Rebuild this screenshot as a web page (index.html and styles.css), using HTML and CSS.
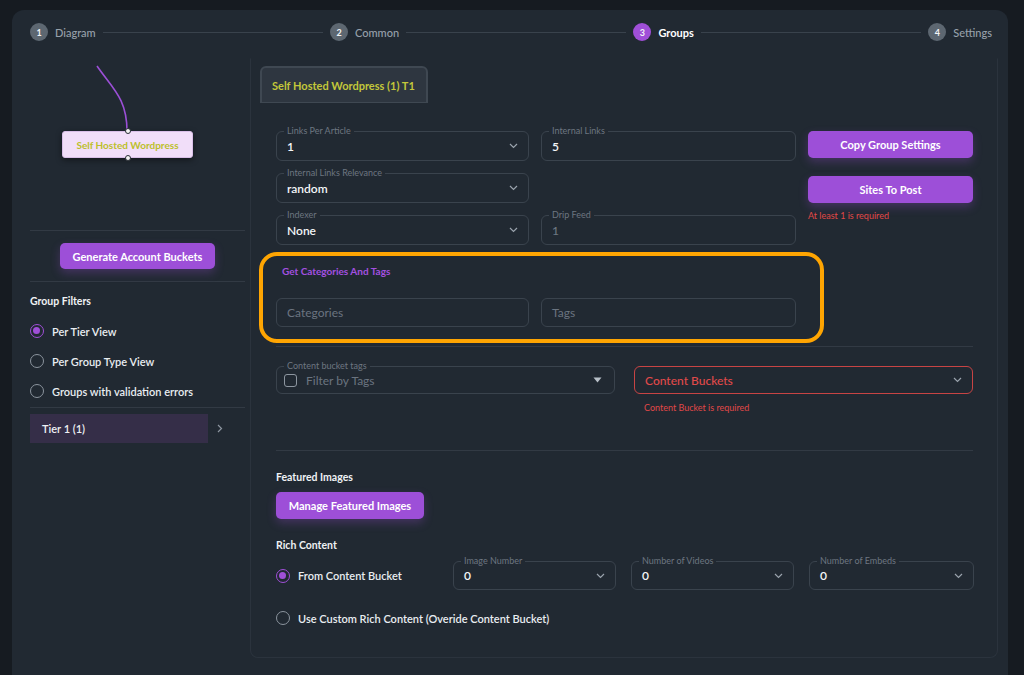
FILE: index.html
```html
<!DOCTYPE html>
<html>
<head>
<meta charset="utf-8">
<link rel="stylesheet" href="styles.css">
</head>
<body>
<div class="app">
  <div class="card">
    <div class="stepper">
      <div class="step"><span class="num">1</span><span class="lbl">Diagram</span></div>
      <div class="line"></div>
      <div class="step"><span class="num">2</span><span class="lbl">Common</span></div>
      <div class="line"></div>
      <div class="step active"><span class="num">3</span><span class="lbl">Groups</span></div>
      <div class="line"></div>
      <div class="step"><span class="num">4</span><span class="lbl">Settings</span></div>
    </div>
    <div class="main">
      <aside class="side">
        <div class="diagram">
          <svg class="edge" width="238" height="172" viewBox="0 0 238 172">
            <path d="M85 8 C 100 30, 115 40, 115 73" fill="none" stroke="#9b4fd6" stroke-width="1.6"/>
          </svg>
          <div class="node">Self Hosted Wordpress<span class="dot dot-top"></span><span class="dot dot-bottom"></span></div>
        </div>
        <div class="sep"></div>
        <div class="gen-wrap"><button class="btn btn-gen">Generate Account Buckets</button></div>
        <div class="sep"></div>
        <div class="side-title">Group Filters</div>
        <div class="filters">
          <label class="radio-row"><span class="radio on"></span>Per Tier View</label>
          <label class="radio-row"><span class="radio"></span>Per Group Type View</label>
          <label class="radio-row"><span class="radio"></span>Groups with validation errors</label>
        </div>
        <div class="sep"></div>
        <div class="tier-row">
          <div class="tier">Tier 1 (1)</div>
          <svg class="tier-chev" width="6" height="9" viewBox="0 0 6 9"><path d="M1 1 L4.5 4.5 L1 8" fill="none" stroke="#8d96a0" stroke-width="1.2"/></svg>
        </div>
      </aside>

      <section class="panel">
        <div class="tabs"><div class="tab">Self Hosted Wordpress (1) T1</div></div>
        <div class="form">
          <div class="grid3">
            <div class="field">
              <span class="flabel">Links Per Article</span>
              <span class="val">1</span>
              <svg class="chev" width="9" height="6" viewBox="0 0 9 6"><path d="M1 1 L4.5 4.5 L8 1" fill="none" stroke="#9aa3ad" stroke-width="1.2"/></svg>
            </div>
            <div class="field">
              <span class="flabel">Internal Links</span>
              <span class="val">5</span>
            </div>
            <div class="actions">
              <button class="btn btn-block">Copy Group Settings</button>
              <button class="btn btn-block btn-sites">Sites To Post</button>
              <div class="err err-sites">At least 1 is required</div>
            </div>
            <div class="field">
              <span class="flabel">Internal Links Relevance</span>
              <span class="val">random</span>
              <svg class="chev" width="9" height="6" viewBox="0 0 9 6"><path d="M1 1 L4.5 4.5 L8 1" fill="none" stroke="#9aa3ad" stroke-width="1.2"/></svg>
            </div>
            <div class="empty"></div>
            <div class="field">
              <span class="flabel">Indexer</span>
              <span class="val">None</span>
              <svg class="chev" width="9" height="6" viewBox="0 0 9 6"><path d="M1 1 L4.5 4.5 L8 1" fill="none" stroke="#9aa3ad" stroke-width="1.2"/></svg>
            </div>
            <div class="field">
              <span class="flabel">Drip Feed</span>
              <span class="val dim">1</span>
            </div>
          </div>

          <div class="highlight">
            <div class="hl-title">Get Categories And Tags</div>
            <div class="hl-inputs">
              <div class="field plain"><span class="ph">Categories</span></div>
              <div class="field plain"><span class="ph">Tags</span></div>
            </div>
          </div>

          <div class="hr hr-1"></div>

          <div class="bucket-row">
            <div class="field f28">
              <span class="flabel">Content bucket tags</span>
              <span class="cbox"></span>
              <span class="ph">Filter by Tags</span>
              <svg class="tri" width="9" height="6" viewBox="0 0 9 6"><path d="M0.5 0.5 L8.5 0.5 L4.5 5.5 Z" fill="#b8c0c8"/></svg>
            </div>
            <div class="bucket-col">
              <div class="field f28 error">
                <span class="val red">Content Buckets</span>
                <svg class="chev" width="9" height="6" viewBox="0 0 9 6"><path d="M1 1 L4.5 4.5 L8 1" fill="none" stroke="#9aa3ad" stroke-width="1.2"/></svg>
              </div>
              <div class="err err-bucket">Content Bucket is required</div>
            </div>
          </div>

          <div class="hr hr-2"></div>

          <div class="sec-title">Featured Images</div>
          <button class="btn btn-feat">Manage Featured Images</button>

          <div class="sec-title rich-title">Rich Content</div>
          <div class="rich-row">
            <label class="radio-row rr"><span class="radio on"></span>From Content Bucket</label>
            <div class="field">
              <span class="flabel">Image Number</span>
              <span class="val">0</span>
              <svg class="chev" width="9" height="6" viewBox="0 0 9 6"><path d="M1 1 L4.5 4.5 L8 1" fill="none" stroke="#9aa3ad" stroke-width="1.2"/></svg>
            </div>
            <div class="field">
              <span class="flabel">Number of Videos</span>
              <span class="val">0</span>
              <svg class="chev" width="9" height="6" viewBox="0 0 9 6"><path d="M1 1 L4.5 4.5 L8 1" fill="none" stroke="#9aa3ad" stroke-width="1.2"/></svg>
            </div>
            <div class="field">
              <span class="flabel">Number of Embeds</span>
              <span class="val">0</span>
              <svg class="chev" width="9" height="6" viewBox="0 0 9 6"><path d="M1 1 L4.5 4.5 L8 1" fill="none" stroke="#9aa3ad" stroke-width="1.2"/></svg>
            </div>
          </div>
          <label class="radio-row rr2"><span class="radio"></span>Use Custom Rich Content (Overide Content Bucket)</label>
        </div>
      </section>
    </div>
  </div>
</div>
</body>
</html>
```

FILE: styles.css
```css
* { box-sizing: border-box; }
html, body { margin: 0; padding: 0; }
body {
  background: #161b21;
  font-family: "Lato", "Noto Sans", sans-serif;
  color: #e8ecf0;
  width: 1024px;
  height: 675px;
  overflow: hidden;
}
.app { padding: 10px 16px 0 12px; }
.card {
  background: #212932;
  border-radius: 12px 12px 0 0;
  height: 665px;
  padding-right: 10px;
}

/* stepper */
.stepper {
  height: 44px;
  display: flex;
  align-items: center;
  padding: 0 6px 0 18px;
}
.step { display: flex; align-items: center; gap: 7px; }
.num {
  width: 18px; height: 18px; border-radius: 50%;
  background: #5d6771; color: #f2f4f6;
  font-size: 9px; font-weight: 700;
  display: flex; align-items: center; justify-content: center;
}
.lbl { font-size: 11px; color: #97a0aa; font-weight: 500; }
.step.active .num { background: #a04fd8; }
.step.active .lbl { color: #ffffff; font-weight: 700; }
.line { flex: 1; height: 1px; background: #39424c; margin: 0 7px; }

/* main */
.main { display: flex; margin-top: 4px; }
.side { width: 238px; padding: 0 5px 0 18px; }
.diagram { position: relative; height: 172px; margin-left: -18px; margin-right: -5px; }
.edge { position: absolute; left: 0; top: 0; }
.node {
  position: absolute; left: 50px; top: 73px;
  width: 131px; height: 27px;
  background: #f1def9;
  border: 1px solid #d9bfe8;
  border-radius: 3px;
  box-shadow: 0 2px 6px rgba(0,0,0,0.45);
  color: #bcc02c; font-size: 10px; font-weight: 700;
  display: flex; align-items: center; justify-content: center;
}
.dot {
  position: absolute; left: 62px; width: 6px; height: 6px; border-radius: 50%;
  background: #f4f4f4; border: 1px solid #2a2f36;
}
.dot-top { top: -4px; }
.dot-bottom { bottom: -4px; }
.sep { height: 1px; background: #323a44; }

.btn {
  background: #9d4fd8;
  color: #ffffff;
  font-family: "Lato", "Noto Sans", sans-serif;
  font-weight: 700; font-size: 11px;
  border: 0; border-radius: 5px;
  box-shadow: 0 4px 10px rgba(157,79,216,0.28);
  display: flex; align-items: center; justify-content: center;
  padding: 0;
}
.gen-wrap { display: flex; justify-content: center; padding: 12px 0; }
.btn-gen { width: 155px; height: 26px; }

.side-title { font-size: 10.5px; font-weight: 700; color: #f0f2f4; margin-top: 12px; line-height: 14px; }
.filters { margin-top: 8px; padding-bottom: 1px; }
.radio-row {
  display: flex; align-items: center; gap: 8px;
  font-size: 11px; font-weight: 600; color: #e9edf1; height: 30px;
}
.radio {
  width: 14px; height: 14px; border-radius: 50%;
  border: 1.6px solid #8b949e; flex: none; position: relative;
}
.radio.on { border-color: #a04fd8; }
.radio.on::after {
  content: ""; position: absolute; left: 2px; top: 2px; width: 7px; height: 7px;
  border-radius: 50%; background: #a04fd8;
}
.tier-row { display: flex; align-items: center; margin-top: 6px; }
.tier {
  width: 178px; height: 29px; background: #352e48;
  display: flex; align-items: center; padding-left: 12px;
  font-size: 11px; font-weight: 600; color: #eef0f3;
}
.tier-chev { margin-left: 9px; }

/* panel */
.panel {
  width: 748px; height: 600px;
  border: 1px solid #2b333d;
  border-top-color: transparent;
  border-radius: 0 0 8px 8px;
}
.tabs { padding: 7px 0 0 9px; }
.tab {
  display: inline-flex; align-items: center;
  height: 37px; padding: 0 11px 0 10px;
  background: #2e3640;
  border: 2px solid #3f4852;
  border-bottom-width: 1px;
  border-radius: 6px 6px 0 0;
  color: #c3c73a; font-size: 11px; font-weight: 700;
}
.form { padding: 28px 24px 0 25px; }
.grid3 {
  display: grid;
  grid-template-columns: 253px 255px 165px;
  grid-template-rows: 30px 30px 30px;
  column-gap: 12px; row-gap: 12px;
}
.field {
  position: relative;
  height: 30px;
  border: 1px solid #3a434d;
  border-radius: 6px;
  display: flex; align-items: center;
  padding: 0 10px;
}
.flabel {
  position: absolute; left: 7px; top: -7px;
  background: #212932; padding: 0 3px;
  font-size: 9px; color: #6d7681; line-height: 12px;
}
.val { font-size: 12px; font-weight: 600; color: #f4f6f8; flex: 1; }
.val.dim { color: #6d7681; font-weight: 500; }
.val.red { color: #e04a4a; font-weight: 500; }
.chev { flex: none; }
.actions { grid-column: 3; grid-row: 1 / span 3; display: flex; flex-direction: column; }
.btn-block { width: 165px; height: 27px; }
.btn-sites { margin-top: 18px; }
.err { color: #e04848; font-size: 9px; line-height: 12px; }
.err-sites { margin-top: 7px; }

.highlight {
  margin: 7px 0 0 -17px;
  width: 565px; height: 91px;
  border: 4px solid #ffa502;
  border-radius: 18px;
  padding: 8px 0 0 13px;
}
.hl-title { color: #a450e0; font-size: 10px; font-weight: 700; line-height: 14px; padding-left: 6px; }
.hl-inputs {
  display: grid; grid-template-columns: 253px 255px; column-gap: 12px; margin-top: 20px;
}
.field.plain { height: 29px; }
.ph { font-size: 12px; color: #6b7480; flex: 1; }

.hr { height: 1px; background: #323a44; }
.hr-1 { margin-top: 3px; }
.bucket-row {
  display: grid; grid-template-columns: 339px 339px; column-gap: 19px; margin-top: 19px;
}
.f28 { height: 28px; padding-left: 7px; }
.cbox {
  width: 13px; height: 13px; border: 1.5px solid #8d96a0; border-radius: 3px; margin-right: 9px; flex: none;
}
.tri { flex: none; margin-right: 2px; }
.field.error { border-color: #c84444; padding-left: 10px; }
.err-bucket { margin-top: 8px; padding-left: 10px; }
.hr-2 { margin-top: 36px; }

.sec-title { font-size: 10.5px; font-weight: 700; color: #eef1f4; line-height: 14px; margin-top: 19px; }
.btn-feat { width: 148px; height: 27px; margin-top: 8px; }
.rich-title { margin-top: 19px; }
.rich-row {
  display: grid; grid-template-columns: 162px 163px 163px 165px; column-gap: 15px;
  margin-top: 9px; align-items: center;
}
.rich-row .field { height: 29px; }
.rr { height: 29px; }
.rr2 { height: 18px; margin-top: 19px; }
```
